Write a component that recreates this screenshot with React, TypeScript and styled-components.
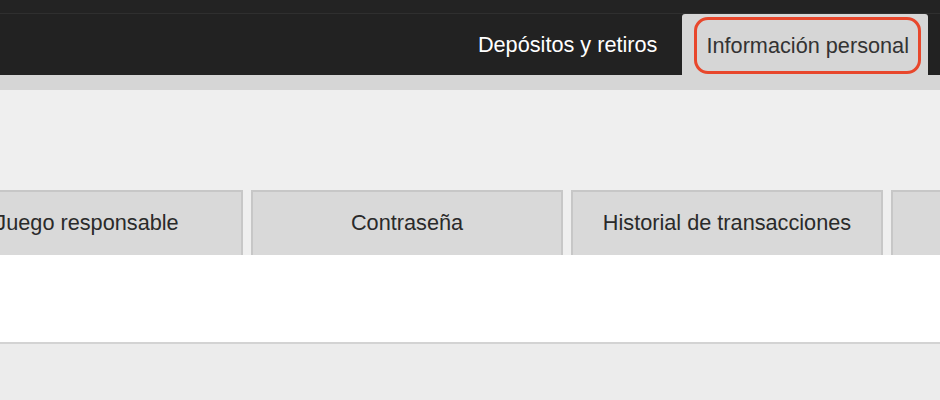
import React from "react";
import styled, { createGlobalStyle } from "styled-components";

const Global = createGlobalStyle`
  html, body { margin: 0; padding: 0; background: #ececec; overflow: hidden; }
  body { font-family: "Liberation Sans", Arial, sans-serif; }
`;

const Page = styled.div`
  width: 940px;
  height: 400px;
  display: flex;
  flex-direction: column;
  overflow: hidden;
  background: #ececec;
`;

const Header = styled.header`
  background: #222222;
  display: flex;
  flex-direction: column;
`;

const TopStrip = styled.div`
  height: 13px;
  background: #232323;
  border-bottom: 1px solid #2f2f2f;
`;

const Nav = styled.nav`
  height: 61px;
  display: flex;
  justify-content: flex-end;
  align-items: stretch;
  padding-right: 12px;
`;

const NavLink = styled.a<{ $active?: boolean }>`
  display: flex;
  align-items: center;
  justify-content: center;
  font-size: 21.7px;
  text-decoration: none;
  color: ${(p) => (p.$active ? "#333333" : "#ffffff")};
  background: ${(p) => (p.$active ? "#d6d6d6" : "transparent")};
  border-radius: 3px 3px 0 0;
  padding: ${(p) => (p.$active ? "3px 7px 1px 12px" : "0 25px 0 0")};
`;

const Highlight = styled.span`
  flex: 1;
  align-self: stretch;
  display: flex;
  align-items: center;
  justify-content: center;
  border: 3px solid #e8472c;
  border-radius: 14px;
  padding: 0 9px;
`;

const Band = styled.div`
  height: 15px;
  background: #d6d6d6;
`;

const Content = styled.section`
  background: #efefef;
  padding-top: 100px;
  display: flex;
  flex-direction: column;
`;

const SubTabs = styled.div`
  display: flex;
  gap: 8px;
  margin-left: -69px;
`;

const SubTab = styled.button`
  flex: 0 0 312px;
  height: 65px;
  box-sizing: border-box;
  background: #d9d9d9;
  border: 2px solid #c7c7c7;
  border-bottom: none;
  font-family: "Liberation Sans", Arial, sans-serif;
  font-size: 21.7px;
  color: #2a2a2a;
  display: flex;
  align-items: center;
  justify-content: center;
  padding: 0 0 2px;
  white-space: nowrap;
`;

const Panel = styled.div`
  height: 87px;
  background: #ffffff;
  border-bottom: 2px solid #d3d3d3;
`;

export default function App() {
  const tabs = ["Juego responsable", "Contraseña", "Historial de transacciones", "Bonos"];
  return (
    <>
      <Global />
      <Page>
        <Header>
          <TopStrip />
          <Nav>
            <NavLink>Depósitos y retiros</NavLink>
            <NavLink $active>
              <Highlight>Información personal</Highlight>
            </NavLink>
          </Nav>
        </Header>
        <Band />
        <Content>
          <SubTabs>
            {tabs.map((t, i) => (
              <SubTab key={t}>{i < 3 ? t : ""}</SubTab>
            ))}
          </SubTabs>
          <Panel />
        </Content>
      </Page>
    </>
  );
}
